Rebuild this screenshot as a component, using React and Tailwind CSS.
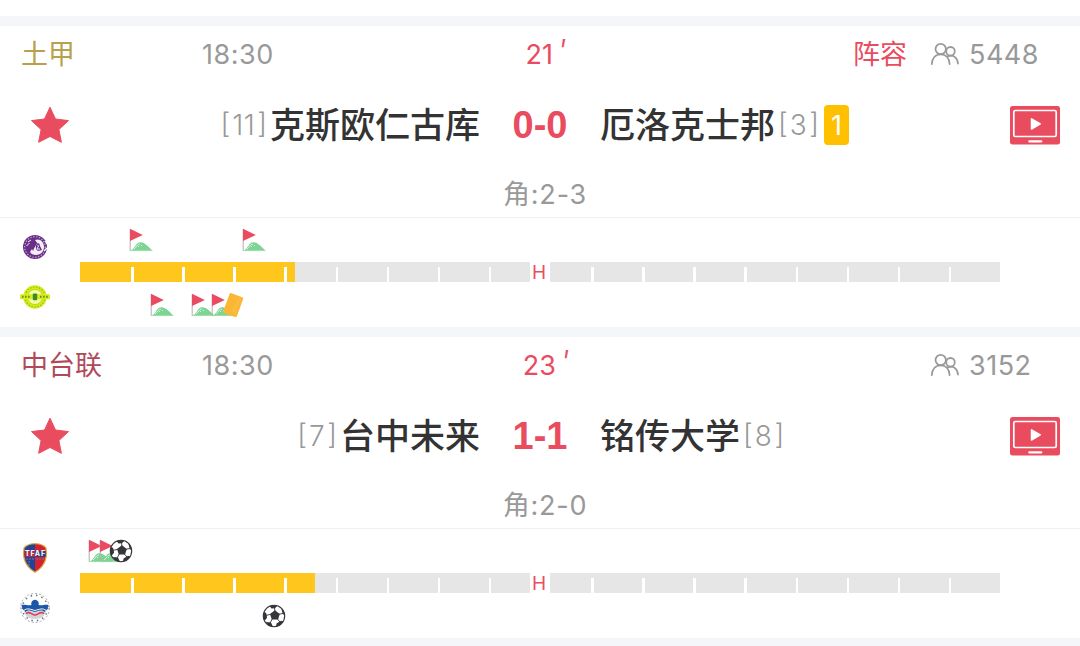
const MATCHES = [
  {
    id: 1,
    league: '土甲',
    leagueColor: 'text-[#b9a04a]',
    time: '18:30',
    minute: 21,
    lineup: true,
    viewers: 5448,
    home: { name: '克斯欧仁古库', rank: 11, logo: PurpleLogo },
    away: { name: '厄洛克士邦', rank: 3, yellow: 1, logo: GreenLogo },
    score: '0-0',
    corners: '2-3',
    homeEvents: [
      { type: 'corner', minute: 6 },
      { type: 'corner', minute: 17 }
    ],
    awayEvents: [
      { type: 'corner', minute: 8 },
      { type: 'corner', minute: 12 },
      { type: 'corner', minute: 14 },
      { type: 'yellow', minute: 15 }
    ]
  },
  {
    id: 2,
    league: '中台联',
    leagueColor: 'text-[#b04a5a]',
    time: '18:30',
    minute: 23,
    viewers: 3152,
    home: { name: '台中未来', rank: 7, logo: ShieldLogo },
    away: { name: '铭传大学', rank: 8, logo: WaveLogo },
    score: '1-1',
    corners: '2-0',
    homeEvents: [
      { type: 'corner', minute: 2 },
      { type: 'corner', minute: 3 },
      { type: 'goal', minute: 4 }
    ],
    awayEvents: [{ type: 'goal', minute: 19 }]
  }
];

const SEGMENTS = Array.from({ length: 18 }, (_, i) => i);

const EVENT_ICONS = {
  corner: CornerIcon,
  yellow: YellowIcon,
  goal: BallIcon
};

function PurpleLogo() {
  return (
    <svg width="26" height="26" viewBox="0 0 26 26">
      <circle cx="13" cy="13" r="12" fill="#6a3088" />
      <circle cx="13" cy="13" r="10.300" fill="none" stroke="#c9afd6" strokeWidth="1.2" strokeDasharray="1.3 1.6" />
      <path d="M13 6c5-2 9 2 9 7s-4 8-8 8c-3 0-5-1-6-3l2-3 1 2 2-4 2 2 1-5z" fill="#f5eef8" />
      <path d="M6 8l3-2M4.500 12l3-3M12 16l3-6 2 3-2 3 4 1M18 9l1 4 2-1" stroke="#f5eef8" strokeWidth="1" fill="none" />
      <path d="M14 11l3-2 1 3 2 4-4 1-2-2z" fill="#6a3088" />
      <path d="M15.500 11l1 1-1.500 3h3" stroke="#f5eef8" strokeWidth="1" fill="none" />
      <path d="M23 7l2 3M22 17l3-3" stroke="#fff" strokeWidth="1.2" />
    </svg>
  );
}

function GreenLogo() {
  return (
    <svg width="30" height="26" viewBox="0 0 30 26">
      <circle cx="15" cy="13" r="11.8" fill="#d2ee18" />
      <circle cx="15" cy="13" r="10" fill="none" stroke="#8fa51e" strokeWidth="1.1" strokeDasharray="1.2 1.8" />
      <circle cx="15" cy="13" r="7.6" fill="#f4fba8" stroke="#bfd90e" />
      <rect x="0" y="10.2" width="30" height="5" rx="1" fill="#d4ec22" />
      <path d="M2 12.7h8M20 12.7h8" stroke="#6f8513" strokeWidth="2" strokeDasharray="1.5 1.6" />
      <rect x="12.800" y="9.6" width="4.4" height="6.6" rx="1" fill="#3f8a22" />
    </svg>
  );
}

function ShieldLogo() {
  return (
    <svg width="28" height="32" viewBox="0 0 28 32">
      <path d="M14 1c4 0 8 1 11.500 4.500C27 14 26 24 14 31 2 24 1 14 2.500 5.500 6 2 10 1 14 1z" fill="#dfa545" />
      <path d="M14 2.200C9 2.200 6 3.500 3.700 6 2.500 15 4 23.500 14 29.500z" fill="#1f4594" />
      <path d="M14 2.200c5 0 8 1.300 10.300 3.800C25.500 15 24 23.500 14 29.500z" fill="#d4212f" />
      <path d="M3.400 9h10.600v6H3.400z" fill="#ae2848" />
      <path d="M14 9h10.600v6H14z" fill="#284488" />
      <text x="14" y="14" textAnchor="middle" fontSize="7" fontWeight="700" fill="#fff" textLength="20">TFAF</text>
      <path d="M5 17h8M15 17h8M8 19v5" stroke="#8d6b9c" strokeWidth="1" strokeDasharray="2 1" />
    </svg>
  );
}

function WaveLogo() {
  return (
    <svg width="32" height="32" viewBox="0 0 32 32">
      <circle cx="16" cy="16" r="14.500" fill="#fff" stroke="#a7abb8" strokeDasharray="2 2" />
      <circle cx="16" cy="16" r="12.700" fill="none" stroke="#737987" strokeWidth="1.600" strokeDasharray="1.500 4" />
      <path d="M5 19c3-2 5 1 8 0s5 1 8 0 4-1 6 0c-1 5-5 8-11 8S6 24 5 19z" fill="#d3d3da" />
      <path d="M2.500 13c4-1 6 1 10 0a3.800 3.800 0 1 1 7 0c4 1 6-1 10 0 0 3-2 5-4 7-3-3-6-1-9.500 0-3.500-1-6.500-3-9.500 0-2-2-4-4-4-7z" fill="#1c56a9" />
      <path d="M5 18.500c3-3 7-1 11 0 4-1 8-3 11 0" fill="none" stroke="#fff" strokeWidth="1" />
      <path d="M7 21.500c4-3 6 1.500 9 1.500s5-4.500 9-1.500" fill="none" stroke="#d9424f" strokeWidth="1.500" />
    </svg>
  );
}

function CornerIcon() {
  return (
    <svg width="24" height="24" viewBox="0 0 24 24">
      <path d="M2 22.500c4-2 5-8.300 9-8.300 4-.5 8 4 11.500 7.300v1z" fill="#7ed495" />
      <path d="M5 21c3-2 3-5 6-5M9 19l1-1M12 17l1 1" stroke="#d5f4dc" strokeWidth="1" fill="none" />
      <path d="M1.200 1.300V22.700" stroke="#bda7ad" strokeWidth="1" />
      <path d="M1 .8L13.800 6.900 1 12.900z" fill="#e94b60" />
      <path d="M1 22.600H23.500" stroke="#91d9a4" strokeWidth=".8" />
    </svg>
  );
}

function YellowIcon() {
  return (
    <svg width="24" height="28" viewBox="0 0 24 28">
      <rect x="5" y="3.500" width="14.500" height="21" rx="1.500" fill="#fbb634" transform="rotate(20 12 14)" />
      <path d="M10 19l6-8 3-5 1 1-5 14-1 3z" fill="#fdc04a" opacity=".6" />
    </svg>
  );
}

function BallIcon() {
  return (
    <svg width="24" height="24" viewBox="0 0 24 24">
      <defs>
        <clipPath id="ball">
          <circle cx="12" cy="12" r="10.800" />
        </clipPath>
      </defs>
      <circle cx="12" cy="12" r="10.700" fill="#fff" />
      <g clipPath="url(#ball)" fill="#35353a">
        <path d="M12.900 6.300l4.900 3.600-1.800 5.600h-6.200L8 10.100z" />
        <path d="M6 0h11l-4 4.200-3.500.2zM0 7l4.200 2 .9 4.800L1.500 18-1 13zM4 18l5 .5 1.800 4L7 25zM14.500 19.500l4.500-2.700 3 1-4 7-4-1zM19.500 5l1.200 5 3.300 2V4l-4-2z" />
        <path d="M12.900 7L12.500 3.500M17 10.200l4-.7M15.400 15l2.500 3M10.200 15L8 19.300M8.500 10.300L3.800 11.500" stroke="#35353a" strokeWidth=".9" />
      </g>
      <circle cx="12" cy="12" r="10.700" fill="none" stroke="#35353a" strokeWidth="1.100" />
    </svg>
  );
}

function StarIcon() {
  return (
    <svg width="40" height="38" viewBox="0 0 40 38">
      <path
        d="M20 1.200l5.500 11.800 13 1.600-9.600 9 2.500 12.700L20 30.500 8.600 36.300l2.500-12.700-9.600-9 13-1.600z"
        fill="#ea4c5f"
        stroke="#ea4c5f"
        strokeWidth="1"
        strokeLinejoin="round"
      />
    </svg>
  );
}

function ViewersIcon() {
  return (
    <svg width="30" height="24" viewBox="0 0 30 24" fill="none" stroke="#999" strokeWidth="1.800" strokeLinecap="round">
      <circle cx="10.700" cy="7" r="5.200" />
      <path d="M1.800 22c.3-5.500 3.500-9.600 8.900-9.600s8.600 4.100 8.900 9.600" />
      <circle cx="20.500" cy="9.300" r="4.300" />
      <path d="M17.500 14.500c5.500-2.500 10 1.200 10.500 7" />
    </svg>
  );
}

function TvIcon() {
  return (
    <svg width="52" height="40" viewBox="0 0 52 40">
      <rect x="1" y="1" width="50" height="38.500" rx="2.500" fill="#ea4c5f" />
      <rect x="4.800" y="5.500" width="42.400" height="26" rx="1.500" fill="none" stroke="#fff" strokeWidth="1.700" />
      <path d="M22.500 13.800v10.200l8.800-5.100z" fill="#fff" stroke="#fff" strokeWidth="1.500" strokeLinejoin="round" />
      <path d="M20.300 36.300h12" stroke="#fff" strokeWidth="2.200" strokeLinecap="round" />
    </svg>
  );
}

function Rank({ value }) {
  return (
    <span className="flex items-center text-[28px] font-light text-[#999]">
      <span className="relative -top-0.5">[</span>
      <span className="mx-0.5 tracking-[0.5px]">{value}</span>
      <span className="relative -top-0.5">]</span>
    </span>
  );
}

function EventLane({ events }) {
  return (
    <div className="relative h-6 w-[920px]">
      {events.map(({ type, minute }) => {
        const Icon = EVENT_ICONS[type];
        return (
          <span
            key={`${type}-${minute}`}
            className="absolute inset-y-0 flex -translate-x-1/2 items-center"
            style={{ left: `${(minute / 90) * 100}%` }}
          >
            <Icon />
          </span>
        );
      })}
    </div>
  );
}

function ProgressBar({ minute }) {
  return (
    <div className="relative h-5 w-[920px] bg-[#e6e6e6]">
      <div className="h-full bg-[#ffc61e]" style={{ width: `${(minute / 90) * 100}%` }} />
      <div className="absolute inset-0 grid grid-cols-[repeat(18,minmax(0,1fr))] items-end">
        {SEGMENTS.map((i) => (
          <span key={i} className={i === 0 ? '' : 'h-[15px] w-[2.5px] bg-white'} />
        ))}
      </div>
      <span className="absolute inset-y-0 left-[450px] flex w-5 items-center justify-center bg-white pr-0.5 text-[19px] text-[#ea4c5f]">
        H
      </span>
    </div>
  );
}

function MatchCard({ match }) {
  const { home, away } = match;
  const HomeLogo = home.logo;
  const AwayLogo = away.logo;

  return (
    <article className="h-[301px] bg-white">
      <div className="grid h-14 grid-cols-[181px_226px_236px_1fr_150px] items-center pl-[21px] text-[27px] text-[#999]">
        <span className={match.leagueColor}>{match.league}</span>
        <span className="tracking-[0.5px]">{match.time}</span>
        <span className="flex items-center justify-center text-[#ea4c5f]">
          {match.minute}
          <span className="relative -top-0.5 ml-1 text-[32px] font-light italic">'</span>
        </span>
        <span className="pr-[23px] text-right text-[#ea4c5f]">{match.lineup && '阵容'}</span>
        <span className="flex items-center gap-[9px] tracking-[0.5px]">
          <ViewersIcon />
          {match.viewers}
        </span>
      </div>

      <div className="grid h-[86px] grid-cols-[80px_400px_120px_400px_80px] items-center">
        <span className="flex justify-center pl-5">
          <StarIcon />
        </span>
        <div className="flex items-center justify-end gap-[3px]">
          <Rank value={home.rank} />
          <span className="text-[35px] font-medium text-[#333]">{home.name}</span>
        </div>
        <strong className="text-center font-['Liberation_Sans'] text-[38px] font-bold text-[#ea4c5f]">{match.score}</strong>
        <div className="flex items-center">
          <span className="mr-[3px] text-[35px] font-medium text-[#333]">{away.name}</span>
          <Rank value={away.rank} />
          {away.yellow && (
            <span className="ml-[5px] flex h-10 w-[25px] items-center justify-center rounded bg-[#ffc000] text-[27px] text-white">
              {away.yellow}
            </span>
          )}
        </div>
        <span className="flex justify-center pr-2.5">
          <TvIcon />
        </span>
      </div>

      <div className="flex h-[50px] items-center justify-center border-b border-[#f0f0f2] pt-1 pl-2.5 text-[27px] tracking-[0.8px] text-[#999]">
        角:{match.corners}
      </div>

      <div className="flex h-[109px]">
        <div className="flex w-20 flex-col items-center gap-[18px] pt-[13px] pr-2.5">
          <span className="flex h-8 items-center"><HomeLogo /></span>
          <span className="flex h-8 items-center"><AwayLogo /></span>
        </div>
        <div className="flex flex-col pt-2.5">
          <EventLane events={match.homeEvents} />
          <div className="pt-2.5 pb-[11px]">
            <ProgressBar minute={match.minute} />
          </div>
          <EventLane events={match.awayEvents} />
        </div>
      </div>
    </article>
  );
}

export default function App() {
  return (
    <main className="h-[646px] w-[1080px] overflow-hidden bg-[#f5f6f9] font-['Inter','Noto_Sans_CJK_SC',sans-serif] leading-none">
      <div className="h-4 bg-white" />
      <div className="flex flex-col gap-2.5 pt-2.5">
        {MATCHES.map((match) => (
          <MatchCard key={match.id} match={match} />
        ))}
      </div>
    </main>
  );
}
